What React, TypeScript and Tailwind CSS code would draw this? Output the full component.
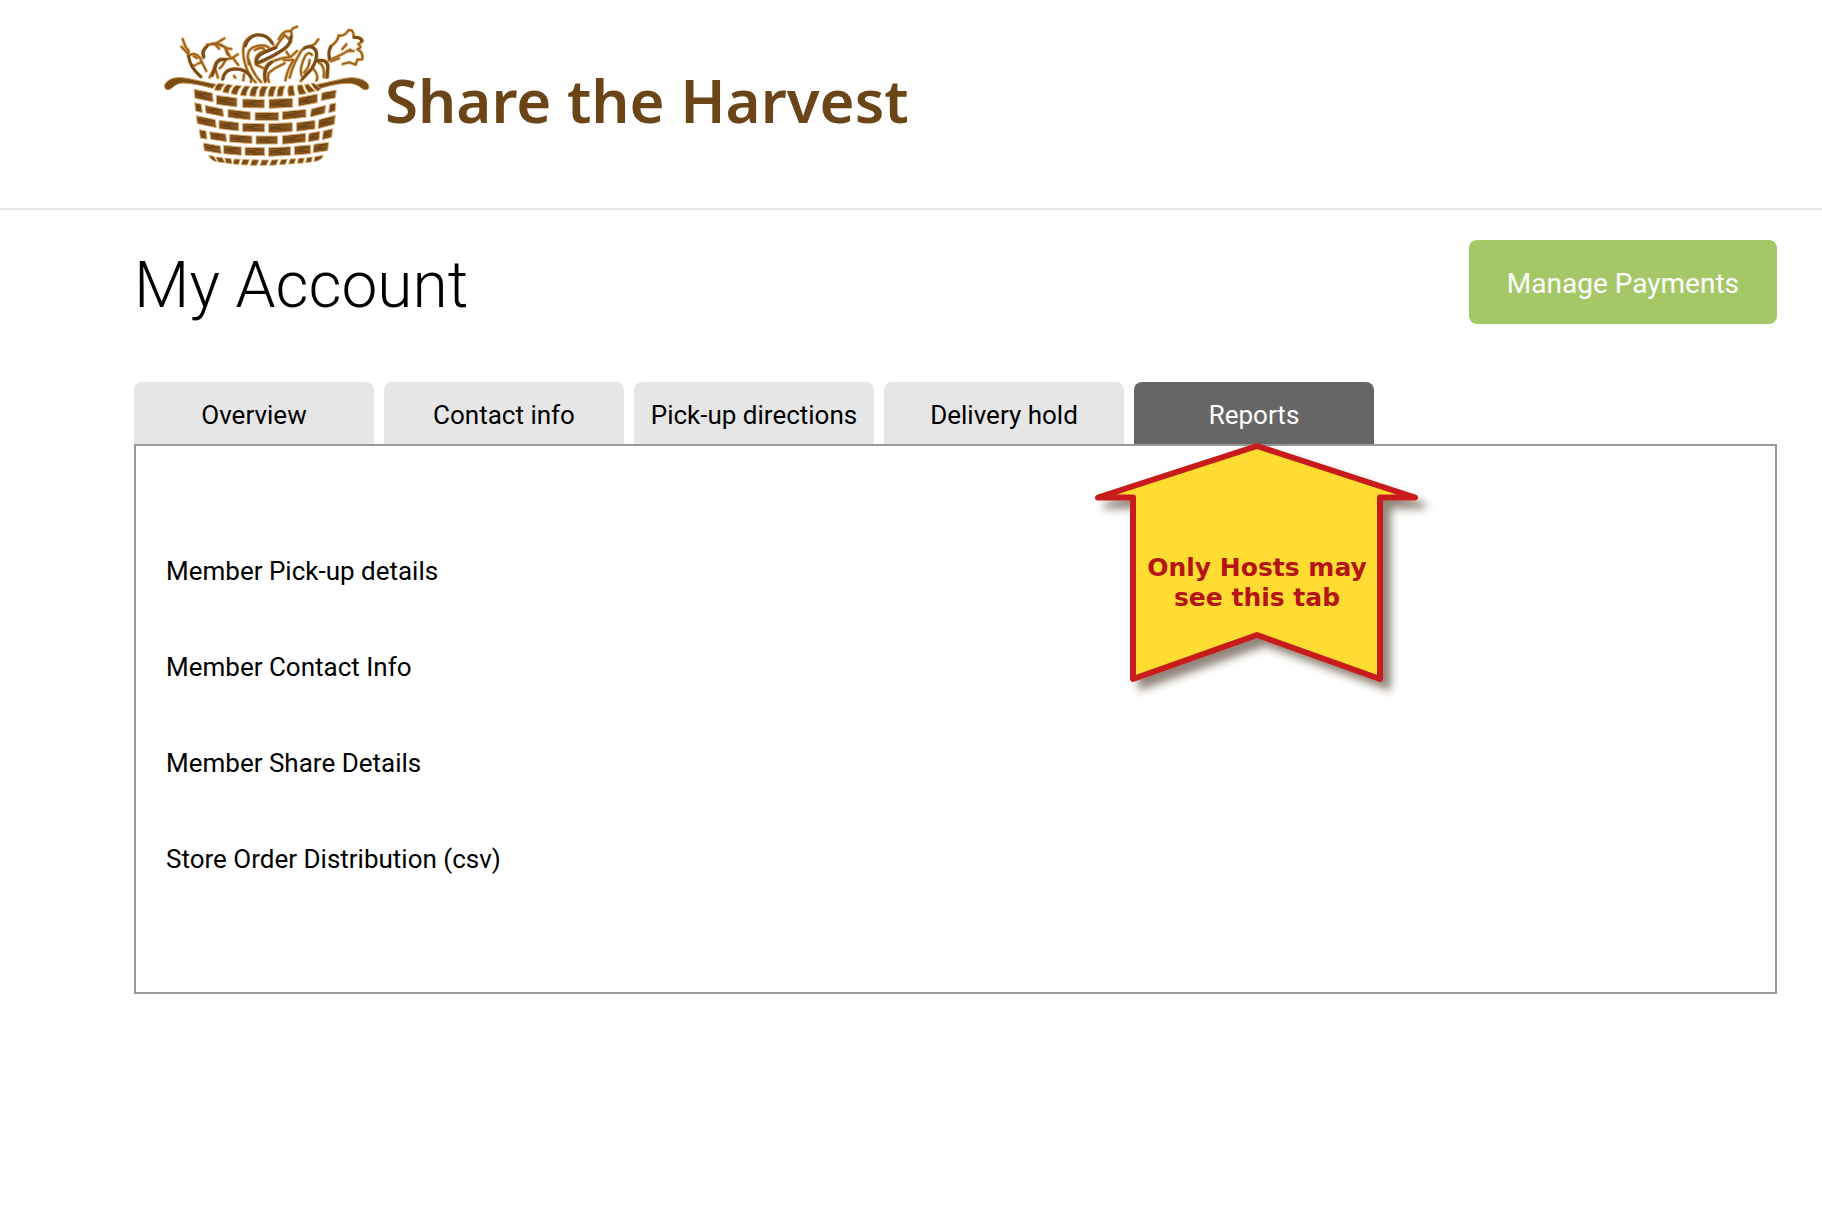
type Brick = [number, number, number, number, number];

// Each brick: left x, left y, right x, right y, height
const bricks: Brick[] = [
  [117, 220, 172, 231, 27], [184, 238, 246, 246, 27], [263, 249, 328, 250, 26], [342, 250, 413, 247, 27], [430, 245, 487, 234, 26], [501, 230, 544, 222, 24],
  [119, 260, 139, 265, 25], [150, 268, 203, 279, 23], [219, 280, 286, 288, 24], [300, 289, 371, 289, 24], [382, 287, 453, 280, 24], [469, 279, 512, 268, 24], [524, 265, 543, 261, 25],
  [124, 299, 181, 311, 24], [192, 313, 251, 320, 25], [263, 322, 329, 323, 25], [341, 323, 412, 320, 27], [425, 320, 480, 313, 26], [492, 311, 541, 298, 27],
  [133, 341, 153, 345, 25], [164, 347, 212, 354, 23], [224, 355, 291, 360, 23], [303, 360, 368, 360, 24], [382, 359, 452, 352, 26], [462, 352, 495, 346, 26], [505, 345, 533, 338, 26],
  [145, 381, 196, 390, 23], [206, 388, 259, 393, 25], [270, 394, 329, 395, 24], [341, 395, 407, 392, 26], [418, 391, 467, 387, 26], [477, 385, 521, 379, 25],
];

function BasketLogo() {
  return (
    <svg viewBox="0 0 690 480" className="h-40 w-[230px] shrink-0" fill="none" aria-hidden="true">
      <defs>
        <linearGradient id="bark" x1="0" x2="1" y1="0" y2="0.15">
          <stop offset="0" stopColor="#7d4e1a" />
          <stop offset="0.5" stopColor="#6b4214" />
          <stop offset="1" stopColor="#865420" />
        </linearGradient>
      </defs>

      {bricks.map(([x1, y1, x2, y2, h], i) => {
        const inset = (x1 + x2) / 2 < 200 ? 3 : (x1 + x2) / 2 > 460 ? -3 : 0;
        return (
          <g key={i}>
            <path
              d={`M${x1} ${y1}L${x2} ${y2}L${x2 + inset} ${y2 + h}L${x1 + inset} ${y1 + h}Z`}
              fill="url(#bark)"
              stroke="#ddb077"
              strokeWidth="3"
              strokeLinejoin="round"
            />
            <path
              d={`M${x1 + 4} ${y1 + 6}L${(x1 + x2) / 2} ${(y1 + y2) / 2 + 6}M${(x1 + x2) / 2} ${(y1 + y2) / 2 + 12}L${x2 - 4} ${y2 + 12}M${x1 + 5} ${y1 + h - 6}L${(x1 + x2) / 2} ${(y1 + y2) / 2 + h - 6}`}
              stroke="#a3672a"
              strokeWidth="2"
            />
          </g>
        );
      })}

      {/* Woven rim and foot */}
      <g stroke="#dfa961" strokeWidth="3" fill="#7a4c18" strokeLinejoin="round">
        <path d="M178 222Q182 206 190 202L210 205Q200 212 196 224Z" />
        <path d="M203 228Q207 211 217 205L233 208Q222 217 220 232Z" />
        <path d="M228 233Q232 214 243 208L260 210Q249 220 245 237Z" />
        <path d="M256 238Q260 218 270 210L285 211Q276 221 273 240Z" />
        <path d="M284 240Q285 219 296 211L312 211Q303 222 302 241Z" />
        <path d="M312 241Q312 220 321 211L339 211Q331 222 328 241Z" />
        <path d="M339 241Q340 220 348 211L364 211Q358 223 355 241Z" />
        <path d="M366 241Q366 220 373 211L390 210Q384 222 383 240Z" />
        <path d="M400 240Q396 220 401 210L415 209Q416 221 420 239Z" />
        <path d="M433 236Q425 220 428 208L442 206Q445 219 454 233Z" />
        <path d="M461 230Q450 217 449 206L460 204Q469 215 481 225Z" />
        <path d="M487 226Q474 214 468 203L476 201Q489 211 498 219Z" />
      </g>
      <g stroke="#dfa961" strokeWidth="2.5" fill="#7a4c18" strokeLinejoin="round">
        <path d="M161 418L176 421L186 437Q170 436 161 418Z" />
        <path d="M182 423L202 425L210 440L190 438Z" />
        <path d="M209 426L228 428L231 443L213 441Z" />
        <path d="M238 429L256 430L250 446L234 443Z" />
        <path d="M264 430L283 431L277 447L258 446Z" />
        <path d="M292 431L312 432L305 448L286 448Z" />
        <path d="M321 432L341 432L334 448L315 448Z" />
        <path d="M350 432L370 431L363 447L344 448Z" />
        <path d="M379 431L397 430L391 445L373 446Z" />
        <path d="M406 429L422 428L418 443L401 444Z" />
        <path d="M431 427L448 426L444 441L427 442Z" />
        <path d="M456 425L472 423L469 438L452 440Z" />
        <path d="M480 422L505 418Q500 434 477 437Z" />
      </g>

      {/* Handles */}
      <g fill="#7a4c18" stroke="#c98f49" strokeWidth="3" strokeLinejoin="round">
        <path d="M30 217Q24 203 44 191Q62 181 96 187L182 205L173 217Q115 201 83 201Q64 202 51 216Q37 226 30 217Z" />
        <path d="M641 217Q645 204 626 193Q602 181 570 187L484 206L496 217Q548 201 583 202Q605 203 620 217Q634 226 641 217Z" />
      </g>

      {/* Vegetables: wide light contour under a narrower dark one */}
      {["#e0ab66", "#94601f"].map((stroke, i) => (
        <g key={stroke} stroke={stroke} strokeWidth={i === 0 ? 10 : 5} strokeLinecap="round" strokeLinejoin="round">
          {/* carrot */}
          <path d="M83 69L91 92L101 104L99 120M79 92L101 115M101 120Q103 152 139 183M101 120Q117 105 134 124Q142 142 154 165M116 120L126 126M113 150L122 147M128 143L137 140" />
          {/* tomato */}
          <path d="M145 126Q136 103 156 90Q181 72 209 93L218 116M156 86L181 84L208 67M181 86L192 98M187 84L221 98L229 99M209 93L227 125" />
          {/* pepper */}
          <path d="M164 184Q176 163 181 143Q190 124 212 130L232 126L248 115M189 185L182 163M212 130Q203 150 194 157M234 127L250 147" />
          {/* round squash */}
          <path d="M202 190Q207 158 240 158Q276 158 289 185L288 198M237 180L241 185M267 176L265 193" />
          {/* mushroom */}
          <path d="M269 139Q252 72 297 58Q336 48 355 86M282 145Q269 99 303 91Q334 82 347 101M300 102Q325 88 329 104M280 128Q292 172 318 198M269 139Q280 181 302 199" />
          {/* eggplant */}
          <path d="M303 146Q294 113 335 104L363 92Q374 76 386 61M303 146Q365 118 392 96Q414 81 409 48M371 70Q386 40 407 46L414 37L426 32M384 54L399 66L409 76M303 146L326 157" />
          {/* onion */}
          <path d="M330 198Q320 147 351 137Q384 124 407 123L426 105M394 107L403 121M385 132L416 132M359 157L341 171Q336 185 342 198M416 132Q397 160 391 193M389 142L360 157" />
          {/* cucumber */}
          <path d="M404 185Q413 147 438 106Q460 79 483 102Q493 126 470 160L437 195M439 178Q433 154 451 119Q462 105 471 117M464 132Q463 154 447 170M466 91L480 84L490 70" />
          {/* beet */}
          <path d="M485 134Q521 126 520 153L518 184M475 158Q493 181 484 194M491 139Q511 149 506 184" />
          {/* leaf */}
          <path d="M522 133Q520 108 526 92Q550 75 551 58Q567 63 580 43Q597 38 596 64Q620 62 623 75L610 85Q624 94 607 100M607 100Q625 108 622 130L607 131L602 146L583 139L563 144M530 129Q562 116 586 101M528 136L552 127M562 99L574 85M576 105L596 105" />
        </g>
      ))}

      {/* Heavy shadow sides of the vegetables */}
      <g stroke="#7a4c18" strokeWidth="9" strokeLinecap="round" strokeLinejoin="round">
        <path d="M101 122Q105 154 136 181M147 122Q140 104 156 92M172 178Q180 160 184 144Q192 128 212 131" />
        <path d="M204 189Q209 160 240 159Q274 159 287 184M271 90Q280 62 305 57Q335 54 351 80" />
        <path d="M305 144Q299 120 335 107L363 95M308 140Q362 118 390 96Q406 84 408 62" />
        <path d="M331 194Q324 154 350 139M448 97Q470 84 482 103Q490 126 470 158L442 188" />
        <path d="M487 134Q517 129 518 153L515 184M524 128Q518 108 528 92M597 64Q616 64 620 74" />
      </g>
    </svg>
  );
}

const tabs = ["Overview", "Contact info", "Pick-up directions", "Delivery hold", "Reports"];
const reports = ["Member Pick-up details", "Member Contact Info", "Member Share Details", "Store Order Distribution (csv)"];

function HostCallout() {
  return (
    <div className="pointer-events-none absolute top-full -left-12 z-10 -mt-1 h-[260px] w-[342px]">
      <svg viewBox="0 0 342 260" className="absolute inset-0 size-full overflow-visible" aria-hidden="true">
        <defs>
          <filter id="shade" x="-10%" y="-10%" width="125%" height="125%">
            <feDropShadow dx="8" dy="8" stdDeviation="4" floodColor="#46321a" floodOpacity="0.6" />
          </filter>
        </defs>
        <path
          d="M171 6L329 57.500H294V239L171 195L47 239V57.500H12Z"
          fill="#ffdc32"
          stroke="#c81e1e"
          strokeWidth="6"
          strokeLinejoin="round"
          filter="url(#shade)"
        />
      </svg>
      <p className="relative pt-[113px] text-center font-['DejaVu_Sans',sans-serif] text-[25px] leading-[30px] font-bold text-[#b41414]">
        Only Hosts may
        <br />
        see this tab
      </p>
    </div>
  );
}

export default function App() {
  return (
    <div className="min-h-screen bg-white font-[Roboto,sans-serif] text-black">
      <header className="border-b-2 border-[#e6e6e6] pt-4 pb-8 pl-[155px]">
        <a href="#" className="inline-flex items-center align-top">
          <BasketLogo />
          <span className="pt-2 font-['Noto_Sans',sans-serif] text-[60px] leading-[64px] font-semibold whitespace-nowrap text-[#6b4417]">
            Share the Harvest
          </span>
        </a>
      </header>

      <main className="pt-[30px] pr-[45px] pl-[134px]">
        <div className="flex items-start justify-between">
          <h1 className="pt-2 text-[64px] leading-[76px] font-light">My Account</h1>
          <button type="button" className="h-[84px] rounded-lg bg-[#a4c867] px-[38px] pt-1 text-[28px] leading-8 text-white">
            Manage Payments
          </button>
        </div>

        <div role="tablist" className="mt-[58px] flex gap-[10px]">
          {tabs.map((tab) => {
            const active = tab === "Reports";
            return (
              <div key={tab} className="relative w-60">
                <button
                  type="button"
                  role="tab"
                  aria-selected={active}
                  className={`h-[62px] w-full rounded-t-lg pt-1 text-[26px] leading-8 whitespace-nowrap ${
                    active ? "bg-[#666666] text-white" : "bg-[#e6e6e6]"
                  }`}
                >
                  {tab}
                </button>
                {active && <HostCallout />}
              </div>
            );
          })}
        </div>

        <section role="tabpanel" className="border-2 border-[#999999] px-[30px] pt-[109px] pb-[117px]">
          <ul className="flex flex-col gap-16">
            {reports.map((report) => (
              <li key={report} className="h-8 text-[26px] leading-8">
                <a href="#">{report}</a>
              </li>
            ))}
          </ul>
        </section>
      </main>
    </div>
  );
}
